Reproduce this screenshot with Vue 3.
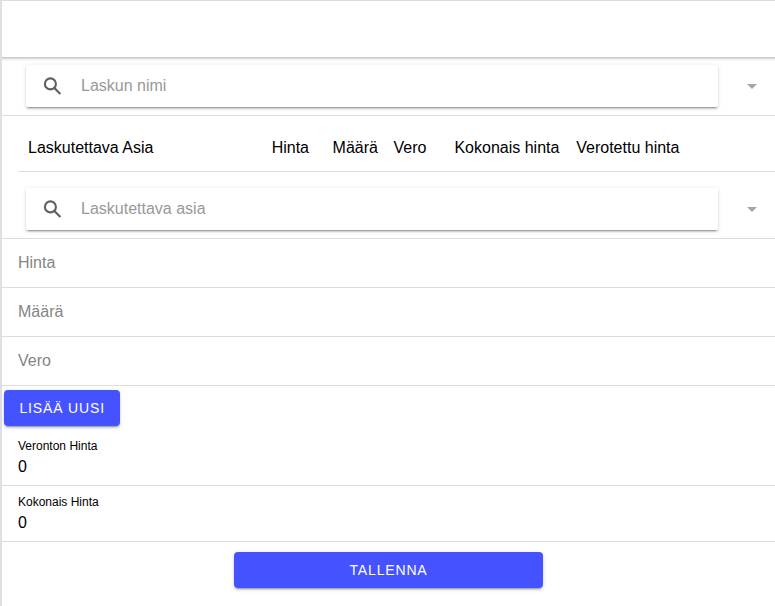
<script setup>
const columns = [
  { label: 'Laskutettava Asia', span: 4 },
  { label: 'Hinta', span: 1 },
  { label: 'Määrä', span: 1 },
  { label: 'Vero', span: 1 },
  { label: 'Kokonais hinta', span: 2 },
  { label: 'Verotettu hinta', span: 3 },
]
const fields = ['Hinta', 'Määrä', 'Vero']
const totals = ['Veronton Hinta', 'Kokonais Hinta']
</script>

<template>
  <div class="page">
    <header class="toolbar"></header>

    <div class="search-row first">
      <label class="searchbar">
        <svg class="search-icon" viewBox="0 0 23 23"><circle cx="9.4" cy="8.9" r="5.5" /><path d="M13.4 12.900L19.400 18.900" /></svg>
        <input type="text" placeholder="Laskun nimi" />
      </label>
      <svg class="caret" viewBox="0 0 10 5"><path d="M0 0h10L5 5z" /></svg>
    </div>

    <div class="table-head">
      <div class="columns">
        <span v-for="c in columns" :key="c.label" class="col" :class="'span-' + c.span">{{ c.label }}</span>
      </div>
    </div>

    <div class="search-row">
      <label class="searchbar">
        <svg class="search-icon" viewBox="0 0 23 23"><circle cx="9.4" cy="8.9" r="5.5" /><path d="M13.4 12.900L19.400 18.900" /></svg>
        <input type="text" placeholder="Laskutettava asia" />
      </label>
      <svg class="caret" viewBox="0 0 10 5"><path d="M0 0h10L5 5z" /></svg>
    </div>

    <div v-for="f in fields" :key="f" class="field">
      <input type="text" :placeholder="f" />
    </div>

    <button class="button add" type="button">Lisää uusi</button>

    <div v-for="t in totals" :key="t" class="total">
      <span class="total-label">{{ t }}</span>
      <span class="total-value">0</span>
    </div>

    <button class="button save" type="button">Tallenna</button>
  </div>
</template>

<style>
body {
  background: #fff;
  overflow: hidden;
}
</style>

<style scoped>
* {
  box-sizing: border-box;
}
.page {
  height: 100vh;
  border-left: 2px solid #dfdfe6;
  border-top: 1px solid #dcdce0;
  background: #fff;
  color: #000;
  font: 16px/20px "Liberation Sans", Arial, sans-serif;
  display: flex;
  flex-direction: column;
}
.toolbar {
  flex: none;
  height: 56px;
}
input {
  width: 100%;
  padding: 0;
  border: 0;
  outline: 0;
  background: none;
  color: #000;
  font: inherit;
}
input::placeholder {
  color: #858585;
  opacity: 1;
}
.search-row {
  flex: none;
  height: 59px;
  padding: 8px 18px 8px 24px;
  border-bottom: 1px solid #dcdcdc;
  display: flex;
  align-items: center;
  justify-content: space-between;
}
.first {
  background: linear-gradient(#cbcbcb 0 1px, #dedede 1px 2px, #efefef 2px 3px, #f9f9f9 3px 4px, #fff 4px);
}
.searchbar {
  width: 692px;
  height: 42px;
  padding-left: 15px;
  border-radius: 2px;
  background: #fff;
  box-shadow: 0 2px 2px 0 rgba(0, 0, 0, 0.14), 0 3px 1px -2px rgba(0, 0, 0, 0.2), 0 1px 5px 0 rgba(0, 0, 0, 0.12);
  display: flex;
  align-items: center;
  gap: 17px;
}
.searchbar input {
  height: 30px;
}
.searchbar input::placeholder {
  color: #999;
}
.search-icon {
  flex: none;
  width: 23px;
  height: 23px;
  margin-top: 1px;
  fill: none;
  stroke: #606060;
  stroke-width: 2.1;
}
.caret {
  width: 10px;
  height: 5px;
  margin-top: 1px;
  fill: #a5a5a5;
}
.table-head {
  flex: none;
  height: 56px;
  margin: 0 0 8px 16px;
  padding: 22px 21px 0 5px;
  border-bottom: 1px solid #dcdcdc;
}
.columns {
  display: grid;
  grid-template-columns: repeat(12, 1fr);
}
.col {
  padding-left: 5px;
  white-space: nowrap;
  min-width: 0;
}
.span-1 { grid-column: span 1; }
.span-2 { grid-column: span 2; }
.span-3 { grid-column: span 3; }
.span-4 { grid-column: span 4; }
.field {
  flex: none;
  height: 49px;
  padding-left: 16px;
  border-bottom: 1px solid #dcdcdc;
  display: flex;
  align-items: center;
}
.button {
  flex: none;
  height: 36px;
  padding: 0;
  border: 0;
  border-radius: 4px;
  background: #4552ff;
  color: #fff;
  font: 14px/36px "Liberation Sans", Arial, sans-serif;
  letter-spacing: 0.84px;
  text-transform: uppercase;
  box-shadow: 0 3px 1px -2px rgba(0, 0, 0, 0.2), 0 2px 2px 0 rgba(0, 0, 0, 0.14), 0 1px 5px 0 rgba(0, 0, 0, 0.12);
}
.add {
  width: 116px;
  margin: 4px 2px;
  padding-left: 0.4px;
}
.total {
  flex: none;
  height: 56px;
  padding: 9px 16px 0;
  border-bottom: 1px solid #dcdcdc;
  display: flex;
  flex-direction: column;
}
.total-label {
  font-size: 12px;
  line-height: 14px;
}
.total-value {
  margin-top: 4px;
}
.save {
  width: 309px;
  margin: 10px 0 0 232px;
}
</style>
